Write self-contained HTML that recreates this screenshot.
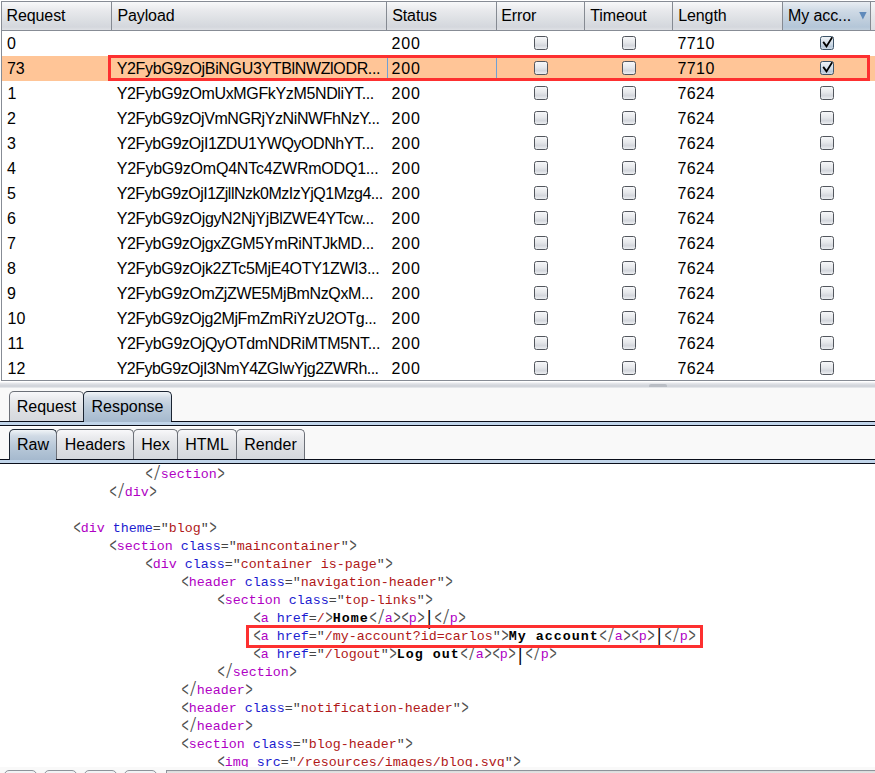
<!DOCTYPE html>
<html><head><meta charset="utf-8">
<style>
*{margin:0;padding:0;box-sizing:border-box}
html,body{width:875px;height:773px;overflow:hidden;background:#f9f9f9;position:relative;font-family:"Liberation Sans",sans-serif}
.a{position:absolute}
#tbl{left:0;top:0;width:875px;height:383px;background:#fff}
.hb{background:#878c95}
.hdr{left:2px;top:2px;width:873px;height:28px;background:linear-gradient(#f8f9fa 0px,#e9eaed 8px,#dcdfe3 18px,#d4d7dd 25px,#dfe1e5 28px)}
.sorted{left:783px;top:2px;width:87px;height:28px;background:linear-gradient(#e8edf2 0px,#d0dbe6 8px,#bfcedd 18px,#b4c6d8 25px,#c0cfdd 28px)}
.sep{width:1px;top:2px;height:28px;background:#858a92}
.ht{top:1px;height:30px;line-height:30px;font-size:16px;letter-spacing:-0.1px;color:#000;white-space:nowrap}
.row{left:2px;width:873px;height:25px}
.sel{background:#ffc597}
.c{font-size:16px;line-height:25px;height:25px;color:#000;white-space:nowrap}
.cb{width:14px;height:14px;border:1px solid #52565d;border-radius:2.5px;background:linear-gradient(#f6f7f9,#e6e8eb 45%,#d4d7dd 72%,#eceef1)}
.cbk{border-color:#3d5468;background:linear-gradient(#eef2f6,#d2dde8 55%,#b7c8d9 80%,#cfdbe6)}
.cbk svg{position:absolute;left:1px;top:0px}
.redbox{border:3px solid #fd3030}
.splitter{left:0;top:382px;width:875px;height:6px;background:linear-gradient(#fbfbfc 0,#e3e5e9 25%,#d3d6dc 55%,#d2d5db 75%,#eceef0 100%)}
.handle{left:649px;top:384px;width:18px;height:3px;background:#b9bdc4;border-radius:2px 2px 0 0}
.tab{border:1px solid #6c7078;border-bottom:none;border-radius:5px 5px 0 0;background:linear-gradient(#f8f8fa 0,#e9eaed 8px,#dcdee2 20px,#d4d7dc 30px);font-size:16px;color:#000;text-align:center;white-space:nowrap}
.tabsel{border-color:#1a2432;background:linear-gradient(#f0f4f7 0,#d0dae5 6px,#b9c9d9 16px,#a5b9ce 30px)}
.dline{background:#0a0e1a}
.band{background:#c0d4e9}
#code{left:0;top:464px;width:875px;height:303px;background:#fff;overflow:hidden}
.ln{position:absolute;left:0;height:18px;line-height:18px;margin-top:2px;margin-left:0.8px;font-family:"Liberation Mono",monospace;font-size:13.333px;white-space:pre;color:#454545}
.k{font-style:normal;display:inline-block;transform:scale(0.9,1.45);transform-origin:50% 36%;color:#505050}
.pipe{display:inline-block;transform:scale(0.8,1.55);transform-origin:50% 40%}
.t{color:#b000c4}
.n{color:#1c1cd0}
.v{color:#b01818}
.b{font-weight:bold;color:#000;letter-spacing:1px}
.btn{top:770px;width:33px;height:10px;border:1px solid #8e939a;border-radius:5px;background:#f2f3f5}
.field{left:166px;top:770px;width:720px;height:10px;border:1px solid #8e939a;background:linear-gradient(#d9d9d9 0,#e6e6e6 2px,#f4f4f4 4px)}
</style></head><body>
<div id="tbl" class="a">
  <div class="a hb" style="left:1px;top:1px;width:874px;height:1px"></div>
  <div class="a hb" style="left:1px;top:1px;width:1px;height:380px"></div>
  <div class="a hdr"></div>
  <div class="a sorted"></div>
  <div class="a hb" style="left:1px;top:30px;width:874px;height:1px"></div>
  <div class="a sep" style="left:111px"></div>
  <div class="a sep" style="left:386px"></div>
  <div class="a sep" style="left:496px"></div>
  <div class="a sep" style="left:584px"></div>
  <div class="a sep" style="left:672px"></div>
  <div class="a sep" style="left:782px"></div>
  <div class="a sep" style="left:870px"></div>
  <div class="a" style="left:871px;top:2px;width:4px;height:28px;background:linear-gradient(#f6f6f8,#e6e7ea 50%,#dcdde2)"></div>
  <div class="a ht" style="left:6.5px">Request</div>
  <div class="a ht" style="left:117.4px">Payload</div>
  <div class="a ht" style="left:392.2px">Status</div>
  <div class="a ht" style="left:501.3px">Error</div>
  <div class="a ht" style="left:590.2px">Timeout</div>
  <div class="a ht" style="left:678.2px">Length</div>
  <div class="a ht" style="left:788px">My acc...</div>
  <svg class="a" style="left:858px;top:11px" width="10" height="10"><path d="M1.2 1 L8.6 1 L4.9 8.4 Z" fill="#5f8abb"/></svg>
  <div id="rows"><div class="a row" style="top:31px"></div>
<div class="a c" style="left:6.9px;top:31px">0</div>
<div class="a c" style="left:391.6px;top:31px;letter-spacing:0.75px">200</div>
<div class="a cb" style="left:534px;top:36px"></div>
<div class="a cb" style="left:622px;top:36px"></div>
<div class="a c" style="left:677.5px;top:31px;letter-spacing:0.4px">7710</div>
<div class="a cb cbk" style="left:820px;top:36px"><svg width="12" height="12"><path d="M1.2 4.9 L4.5 9.4 L10.2 0.3" fill="none" stroke="#000" stroke-width="1.8" stroke-linejoin="miter"/></svg></div>
<div class="a row sel" style="top:56px"></div>
<div class="a c" style="left:6.9px;top:56px">73</div>
<div class="a c" style="left:116.7px;top:56px;letter-spacing:-0.345px">Y2FybG9zOjBiNGU3YTBlNWZlODR...</div>
<div class="a c" style="left:391.6px;top:56px;letter-spacing:0.75px">200</div>
<div class="a cb" style="left:534px;top:61px"></div>
<div class="a cb" style="left:622px;top:61px"></div>
<div class="a c" style="left:677.5px;top:56px;letter-spacing:0.4px">7710</div>
<div class="a cb cbk" style="left:820px;top:61px"><svg width="12" height="12"><path d="M1.2 4.9 L4.5 9.4 L10.2 0.3" fill="none" stroke="#000" stroke-width="1.8" stroke-linejoin="miter"/></svg></div>
<div class="a row" style="top:81px"></div>
<div class="a c" style="left:7.6px;top:81px">1</div>
<div class="a c" style="left:116.7px;top:81px;letter-spacing:-0.356px">Y2FybG9zOmUxMGFkYzM5NDliYT...</div>
<div class="a c" style="left:391.6px;top:81px;letter-spacing:0.75px">200</div>
<div class="a cb" style="left:534px;top:86px"></div>
<div class="a cb" style="left:622px;top:86px"></div>
<div class="a c" style="left:677.5px;top:81px;letter-spacing:0.4px">7624</div>
<div class="a cb" style="left:820px;top:86px"></div>
<div class="a row" style="top:106px"></div>
<div class="a c" style="left:6.9px;top:106px">2</div>
<div class="a c" style="left:116.7px;top:106px;letter-spacing:-0.414px">Y2FybG9zOjVmNGRjYzNiNWFhNzY...</div>
<div class="a c" style="left:391.6px;top:106px;letter-spacing:0.75px">200</div>
<div class="a cb" style="left:534px;top:111px"></div>
<div class="a cb" style="left:622px;top:111px"></div>
<div class="a c" style="left:677.5px;top:106px;letter-spacing:0.4px">7624</div>
<div class="a cb" style="left:820px;top:111px"></div>
<div class="a row" style="top:131px"></div>
<div class="a c" style="left:6.9px;top:131px">3</div>
<div class="a c" style="left:116.7px;top:131px;letter-spacing:-0.428px">Y2FybG9zOjI1ZDU1YWQyODNhYT...</div>
<div class="a c" style="left:391.6px;top:131px;letter-spacing:0.75px">200</div>
<div class="a cb" style="left:534px;top:136px"></div>
<div class="a cb" style="left:622px;top:136px"></div>
<div class="a c" style="left:677.5px;top:131px;letter-spacing:0.4px">7624</div>
<div class="a cb" style="left:820px;top:136px"></div>
<div class="a row" style="top:156px"></div>
<div class="a c" style="left:6.9px;top:156px">4</div>
<div class="a c" style="left:116.7px;top:156px;letter-spacing:-0.212px">Y2FybG9zOmQ4NTc4ZWRmODQ1...</div>
<div class="a c" style="left:391.6px;top:156px;letter-spacing:0.75px">200</div>
<div class="a cb" style="left:534px;top:161px"></div>
<div class="a cb" style="left:622px;top:161px"></div>
<div class="a c" style="left:677.5px;top:156px;letter-spacing:0.4px">7624</div>
<div class="a cb" style="left:820px;top:161px"></div>
<div class="a row" style="top:181px"></div>
<div class="a c" style="left:6.9px;top:181px">5</div>
<div class="a c" style="left:116.7px;top:181px;letter-spacing:-0.506px">Y2FybG9zOjI1ZjllNzk0MzIzYjQ1Mzg4...</div>
<div class="a c" style="left:391.6px;top:181px;letter-spacing:0.75px">200</div>
<div class="a cb" style="left:534px;top:186px"></div>
<div class="a cb" style="left:622px;top:186px"></div>
<div class="a c" style="left:677.5px;top:181px;letter-spacing:0.4px">7624</div>
<div class="a cb" style="left:820px;top:186px"></div>
<div class="a row" style="top:206px"></div>
<div class="a c" style="left:6.9px;top:206px">6</div>
<div class="a c" style="left:116.7px;top:206px;letter-spacing:-0.338px">Y2FybG9zOjgyN2NjYjBlZWE4YTcw...</div>
<div class="a c" style="left:391.6px;top:206px;letter-spacing:0.75px">200</div>
<div class="a cb" style="left:534px;top:211px"></div>
<div class="a cb" style="left:622px;top:211px"></div>
<div class="a c" style="left:677.5px;top:206px;letter-spacing:0.4px">7624</div>
<div class="a cb" style="left:820px;top:211px"></div>
<div class="a row" style="top:231px"></div>
<div class="a c" style="left:6.9px;top:231px">7</div>
<div class="a c" style="left:116.7px;top:231px;letter-spacing:-0.36px">Y2FybG9zOjgxZGM5YmRiNTJkMD...</div>
<div class="a c" style="left:391.6px;top:231px;letter-spacing:0.75px">200</div>
<div class="a cb" style="left:534px;top:236px"></div>
<div class="a cb" style="left:622px;top:236px"></div>
<div class="a c" style="left:677.5px;top:231px;letter-spacing:0.4px">7624</div>
<div class="a cb" style="left:820px;top:236px"></div>
<div class="a row" style="top:256px"></div>
<div class="a c" style="left:6.9px;top:256px">8</div>
<div class="a c" style="left:116.7px;top:256px;letter-spacing:-0.335px">Y2FybG9zOjk2ZTc5MjE4OTY1ZWI3...</div>
<div class="a c" style="left:391.6px;top:256px;letter-spacing:0.75px">200</div>
<div class="a cb" style="left:534px;top:261px"></div>
<div class="a cb" style="left:622px;top:261px"></div>
<div class="a c" style="left:677.5px;top:256px;letter-spacing:0.4px">7624</div>
<div class="a cb" style="left:820px;top:261px"></div>
<div class="a row" style="top:281px"></div>
<div class="a c" style="left:6.9px;top:281px">9</div>
<div class="a c" style="left:116.7px;top:281px;letter-spacing:-0.361px">Y2FybG9zOmZjZWE5MjBmNzQxM...</div>
<div class="a c" style="left:391.6px;top:281px;letter-spacing:0.75px">200</div>
<div class="a cb" style="left:534px;top:286px"></div>
<div class="a cb" style="left:622px;top:286px"></div>
<div class="a c" style="left:677.5px;top:281px;letter-spacing:0.4px">7624</div>
<div class="a cb" style="left:820px;top:286px"></div>
<div class="a row" style="top:306px"></div>
<div class="a c" style="left:7.6px;top:306px">10</div>
<div class="a c" style="left:116.7px;top:306px;letter-spacing:-0.383px">Y2FybG9zOjg2MjFmZmRiYzU2OTg...</div>
<div class="a c" style="left:391.6px;top:306px;letter-spacing:0.75px">200</div>
<div class="a cb" style="left:534px;top:311px"></div>
<div class="a cb" style="left:622px;top:311px"></div>
<div class="a c" style="left:677.5px;top:306px;letter-spacing:0.4px">7624</div>
<div class="a cb" style="left:820px;top:311px"></div>
<div class="a row" style="top:331px"></div>
<div class="a c" style="left:7.6px;top:331px">11</div>
<div class="a c" style="left:116.7px;top:331px;letter-spacing:-0.331px">Y2FybG9zOjQyOTdmNDRiMTM5NT...</div>
<div class="a c" style="left:391.6px;top:331px;letter-spacing:0.75px">200</div>
<div class="a cb" style="left:534px;top:336px"></div>
<div class="a cb" style="left:622px;top:336px"></div>
<div class="a c" style="left:677.5px;top:331px;letter-spacing:0.4px">7624</div>
<div class="a cb" style="left:820px;top:336px"></div>
<div class="a row" style="top:356px"></div>
<div class="a c" style="left:7.6px;top:356px">12</div>
<div class="a c" style="left:116.7px;top:356px;letter-spacing:-0.532px">Y2FybG9zOjI3NmY4ZGIwYjg2ZWRh...</div>
<div class="a c" style="left:391.6px;top:356px;letter-spacing:0.75px">200</div>
<div class="a cb" style="left:534px;top:361px"></div>
<div class="a cb" style="left:622px;top:361px"></div>
<div class="a c" style="left:677.5px;top:356px;letter-spacing:0.4px">7624</div>
<div class="a cb" style="left:820px;top:361px"></div>
<div class="a" style="left:387px;top:56px;width:1px;height:25px;background:#6ea0d6"></div>
<div class="a" style="left:496px;top:56px;width:1px;height:25px;background:#6ea0d6"></div>
<div class="a redbox" style="left:108px;top:55px;width:762px;height:26px"></div></div><!--rows-->
  <div class="a hb" style="left:1px;top:380px;width:874px;height:1px"></div>
</div>
<div class="a splitter"></div>
<div class="a handle"></div>

<!-- outer tabs -->
<div class="a tab" style="left:9px;top:391px;width:75px;height:31px;line-height:29px">Request</div>
<div class="a tab tabsel" style="left:83px;top:391px;width:89px;height:31px;line-height:29px">Response</div>
<div class="a dline" style="left:0;top:421px;width:84px;height:1px"></div>
<div class="a dline" style="left:171px;top:421px;width:704px;height:1px"></div>
<div class="a band" style="left:0;top:422px;width:875px;height:3px"></div>
<div class="a dline" style="left:0;top:425px;width:875px;height:1px"></div>
<div class="a" style="left:0;top:426px;width:875px;height:1px;background:#fff"></div>

<!-- inner tabs -->
<div class="a tab tabsel" style="left:9px;top:429px;width:48px;height:31px;line-height:29px">Raw</div>
<div class="a tab" style="left:56px;top:429px;width:78px;height:31px;line-height:29px">Headers</div>
<div class="a tab" style="left:133px;top:429px;width:45px;height:31px;line-height:29px">Hex</div>
<div class="a tab" style="left:177px;top:429px;width:60px;height:31px;line-height:29px">HTML</div>
<div class="a tab" style="left:236px;top:429px;width:69px;height:31px;line-height:29px">Render</div>
<div class="a dline" style="left:0;top:459px;width:9px;height:1px"></div>
<div class="a dline" style="left:56px;top:459px;width:819px;height:1px"></div>
<div class="a band" style="left:0;top:460px;width:875px;height:3px"></div>
<div class="a dline" style="left:0;top:463px;width:875px;height:1px"></div>

<div id="code" class="a">
<div class="ln" style="top:0px;left:144px"><i class="k">&lt;</i><i class="k">/</i><span class="t">section</span><i class="k">&gt;</i></div>
<div class="ln" style="top:18px;left:108px"><i class="k">&lt;</i><i class="k">/</i><span class="t">div</span><i class="k">&gt;</i></div>
<div class="ln" style="top:54px;left:72px"><i class="k">&lt;</i><span class="t">div</span> <span class="n">theme</span>="<span class="v">blog</span>"<i class="k">&gt;</i></div>
<div class="ln" style="top:72px;left:108px"><i class="k">&lt;</i><span class="t">section</span> <span class="n">class</span>="<span class="v">maincontainer</span>"<i class="k">&gt;</i></div>
<div class="ln" style="top:90px;left:144px"><i class="k">&lt;</i><span class="t">div</span> <span class="n">class</span>="<span class="v">container is-page</span>"<i class="k">&gt;</i></div>
<div class="ln" style="top:108px;left:180px"><i class="k">&lt;</i><span class="t">header</span> <span class="n">class</span>="<span class="v">navigation-header</span>"<i class="k">&gt;</i></div>
<div class="ln" style="top:126px;left:216px"><i class="k">&lt;</i><span class="t">section</span> <span class="n">class</span>="<span class="v">top-links</span>"<i class="k">&gt;</i></div>
<div class="ln" style="top:144px;left:252px"><i class="k">&lt;</i><span class="t">a</span> <span class="n">href</span>=<span class="v">/</span><i class="k">&gt;</i><span class="b">Home</span><i class="k">&lt;</i><i class="k">/</i><span class="t">a</span><i class="k">&gt;</i><i class="k">&lt;</i><span class="t">p</span><i class="k">&gt;</i><span class="b pipe">|</span><i class="k">&lt;</i><i class="k">/</i><span class="t">p</span><i class="k">&gt;</i></div>
<div class="ln" style="top:162px;left:252px"><i class="k">&lt;</i><span class="t">a</span> <span class="n">href</span>="<span class="v">/my-account?id=carlos</span>"<i class="k">&gt;</i><span class="b">My account</span><i class="k">&lt;</i><i class="k">/</i><span class="t">a</span><i class="k">&gt;</i><i class="k">&lt;</i><span class="t">p</span><i class="k">&gt;</i><span class="b pipe">|</span><i class="k">&lt;</i><i class="k">/</i><span class="t">p</span><i class="k">&gt;</i></div>
<div class="ln" style="top:180px;left:252px"><i class="k">&lt;</i><span class="t">a</span> <span class="n">href</span>="<span class="v">/logout</span>"<i class="k">&gt;</i><span class="b">Log out</span><i class="k">&lt;</i><i class="k">/</i><span class="t">a</span><i class="k">&gt;</i><i class="k">&lt;</i><span class="t">p</span><i class="k">&gt;</i><span class="b pipe">|</span><i class="k">&lt;</i><i class="k">/</i><span class="t">p</span><i class="k">&gt;</i></div>
<div class="ln" style="top:198px;left:216px"><i class="k">&lt;</i><i class="k">/</i><span class="t">section</span><i class="k">&gt;</i></div>
<div class="ln" style="top:216px;left:180px"><i class="k">&lt;</i><i class="k">/</i><span class="t">header</span><i class="k">&gt;</i></div>
<div class="ln" style="top:234px;left:180px"><i class="k">&lt;</i><span class="t">header</span> <span class="n">class</span>="<span class="v">notification-header</span>"<i class="k">&gt;</i></div>
<div class="ln" style="top:252px;left:180px"><i class="k">&lt;</i><i class="k">/</i><span class="t">header</span><i class="k">&gt;</i></div>
<div class="ln" style="top:270px;left:180px"><i class="k">&lt;</i><span class="t">section</span> <span class="n">class</span>="<span class="v">blog-header</span>"<i class="k">&gt;</i></div>
<div class="ln" style="top:288px;left:216px"><i class="k">&lt;</i><span class="t">img</span> <span class="n">src</span>="<span class="v">/resources/images/blog.svg</span>"<i class="k">&gt;</i></div>
<div class="a redbox" style="left:246px;top:161px;width:457px;height:23px"></div>
</div>

<div class="a btn" style="left:4px"></div>
<div class="a btn" style="left:44px"></div>
<div class="a btn" style="left:84px"></div>
<div class="a btn" style="left:124px"></div>
<div class="a field"></div>

</body></html>
